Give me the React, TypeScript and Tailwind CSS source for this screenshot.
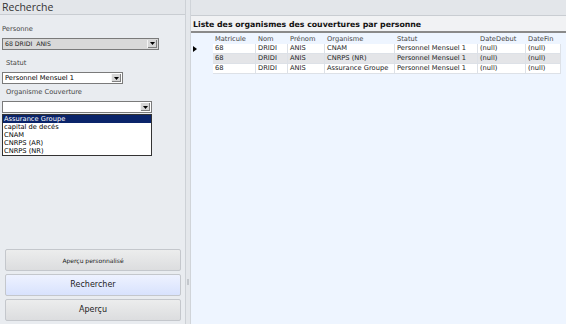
import React from "react"

const font = { fontFamily: '"DejaVu Sans", Verdana, sans-serif' }

const rows = [
  { mat: "68", nom: "DRIDI", prenom: "ANIS", org: "CNAM", statut: "Personnel Mensuel 1", debut: "(null)", fin: "(null)" },
  { mat: "68", nom: "DRIDI", prenom: "ANIS", org: "CNRPS (NR)", statut: "Personnel Mensuel 1", debut: "(null)", fin: "(null)" },
  { mat: "68", nom: "DRIDI", prenom: "ANIS", org: "Assurance Groupe", statut: "Personnel Mensuel 1", debut: "(null)", fin: "(null)" },
]

const options = ["Assurance Groupe", "capital de decés", "CNAM", "CNRPS (AR)", "CNRPS (NR)"]

function DropButton() {
  return (
    <div className="flex h-full w-[10px] items-center justify-center border-l border-[#f4f4f4] bg-[#d6d6d6] shadow-[inset_-1px_-1px_0_#808080]">
      <svg width="5" height="3" viewBox="0 0 5 3">
        <path d="M0 0 L5 0 L2.5 3 Z" fill="#000" />
      </svg>
    </div>
  )
}

function Combo({ value, width, gray, small }: { value: string; width: string; gray?: boolean; small?: boolean }) {
  return (
    <div
      className={`flex h-[12px] items-stretch border border-[#7a7a7a] p-[1px] ${width} ${gray ? "bg-[#d9d9d9]" : "bg-white"}`}
    >
      <div
        className={`flex flex-1 items-center overflow-hidden whitespace-pre pl-[1px] ${
          small ? "text-[6.2px] text-[#222]" : "text-[6.7px] text-black"
        } leading-none`}
      >
        {value}
      </div>
      <DropButton />
    </div>
  )
}

function Btn({ label, blue, small }: { label: string; blue?: boolean; small?: boolean }) {
  return (
    <button
      className={`flex h-[22px] w-full items-center justify-center rounded-[2px] border border-[#c4c7cc] ${
        blue ? "bg-gradient-to-b from-[#eef2ff] to-[#d8e2fd]" : "bg-gradient-to-b from-[#eceded] to-[#dcdddf]"
      } ${small ? "text-[6px]" : "text-[8px]"} text-[#222]`}
    >
      {label}
    </button>
  )
}

export default function App() {
  return (
    <div className="flex h-[324px] w-[566px] overflow-hidden bg-[#e9ecf0]" style={font}>
      {/* left search panel */}
      <aside className="relative flex w-[186px] flex-col border-r border-[#cdd1d6] bg-[#e9ecf0]">
        <div className="flex h-[15px] items-center border-b border-[#c9cdd2] bg-[#e3e6ea] pl-[2px]">
          <span className="text-[10.5px] leading-none text-[#333]" style={{ fontFamily: '"Open Sans", sans-serif' }}>
            Recherche
          </span>
        </div>

        <div className="flex flex-col pl-[2px] text-[6.7px] text-[#444]">
          <span className="mt-[11px] leading-none">Personne</span>
          <div className="mt-[5px]">
            <Combo value="68 DRIDI  ANIS" width="w-[157px]" gray small />
          </div>
          <span className="ml-[4px] mt-[10px] leading-none">Statut</span>
          <div className="mt-[6px]">
            <Combo value="Personnel Mensuel 1" width="w-[121px]" />
          </div>
          <span className="ml-[4px] mt-[5px] leading-none">Organisme Couverture</span>
          <div className="relative mt-[5px]">
            <Combo value="" width="w-[150px]" />
            <ul className="absolute left-0 top-[13px] z-10 w-[150px] border border-[#333] bg-white text-[6.7px] leading-[8px] text-black">
              {options.map((o, i) => (
                <li key={o} className={`h-[8px] pl-[1px] ${i === 0 ? "bg-[#0a246a] text-white" : ""}`}>
                  {o}
                </li>
              ))}
            </ul>
          </div>
        </div>

        <div className="mt-auto flex flex-col gap-[3px] px-[5px] pb-[3px] pr-[4px]">
          <Btn label="Aperçu personnalisé" small />
          <Btn label="Rechercher" blue />
          <Btn label="Aperçu" />
        </div>
      </aside>

      {/* splitter */}
      <div className="flex w-[4px] items-center bg-[#e4e7eb]">
        <div className="ml-[1px] mt-[240px] h-[6px] w-[2px] bg-[#c3c7cc]" />
      </div>

      {/* right result panel */}
      <main className="flex flex-1 flex-col border-l border-[#d0d4d9] bg-[#eef5ff]">
        <div className="h-[16px] border-b border-[#c9cdd2] bg-[#e3e6ea]" />
        <div className="flex h-[17px] items-end border-b-2 border-[#8a8a8a] bg-[#f1f2f4] pb-[2px] pl-[2px]">
          <span className="text-[7.8px] font-bold leading-none text-[#111]">
            Liste des organismes des couvertures par personne
          </span>
        </div>

        <div className="pt-[2px] text-[6.7px] leading-none text-[#222]">
          <div className="grid h-[9px] grid-cols-[22px_43px_32px_37px_70px_83px_48px_35px] items-center text-[#444]">
            <span />
            {["Matricule", "Nom", "Prénom", "Organisme", "Statut", "DateDebut", "DateFin"].map((h) => (
              <span key={h} className="pl-[2px]">
                {h}
              </span>
            ))}
          </div>
          {rows.map((r, i) => (
            <div
              key={i}
              className="grid h-[10px] grid-cols-[22px_43px_32px_37px_70px_83px_48px_35px] items-stretch"
            >
              <span className="flex items-center pl-[2px]">
                {i === 0 && (
                  <svg width="4" height="6" viewBox="0 0 4 6">
                    <path d="M0 0 L4 3 L0 6 Z" fill="#000" />
                  </svg>
                )}
              </span>
              {[r.mat, r.nom, r.prenom, r.org, r.statut, r.debut, r.fin].map((c, j) => (
                <span
                  key={j}
                  className={`flex items-center overflow-hidden whitespace-nowrap border-b border-r border-[#dde1e7] pl-[2px] ${
                    i === 1 ? "bg-[#e4e5e8]" : "bg-white"
                  }`}
                >
                  {c}
                </span>
              ))}
            </div>
          ))}
        </div>
      </main>
    </div>
  )
}
